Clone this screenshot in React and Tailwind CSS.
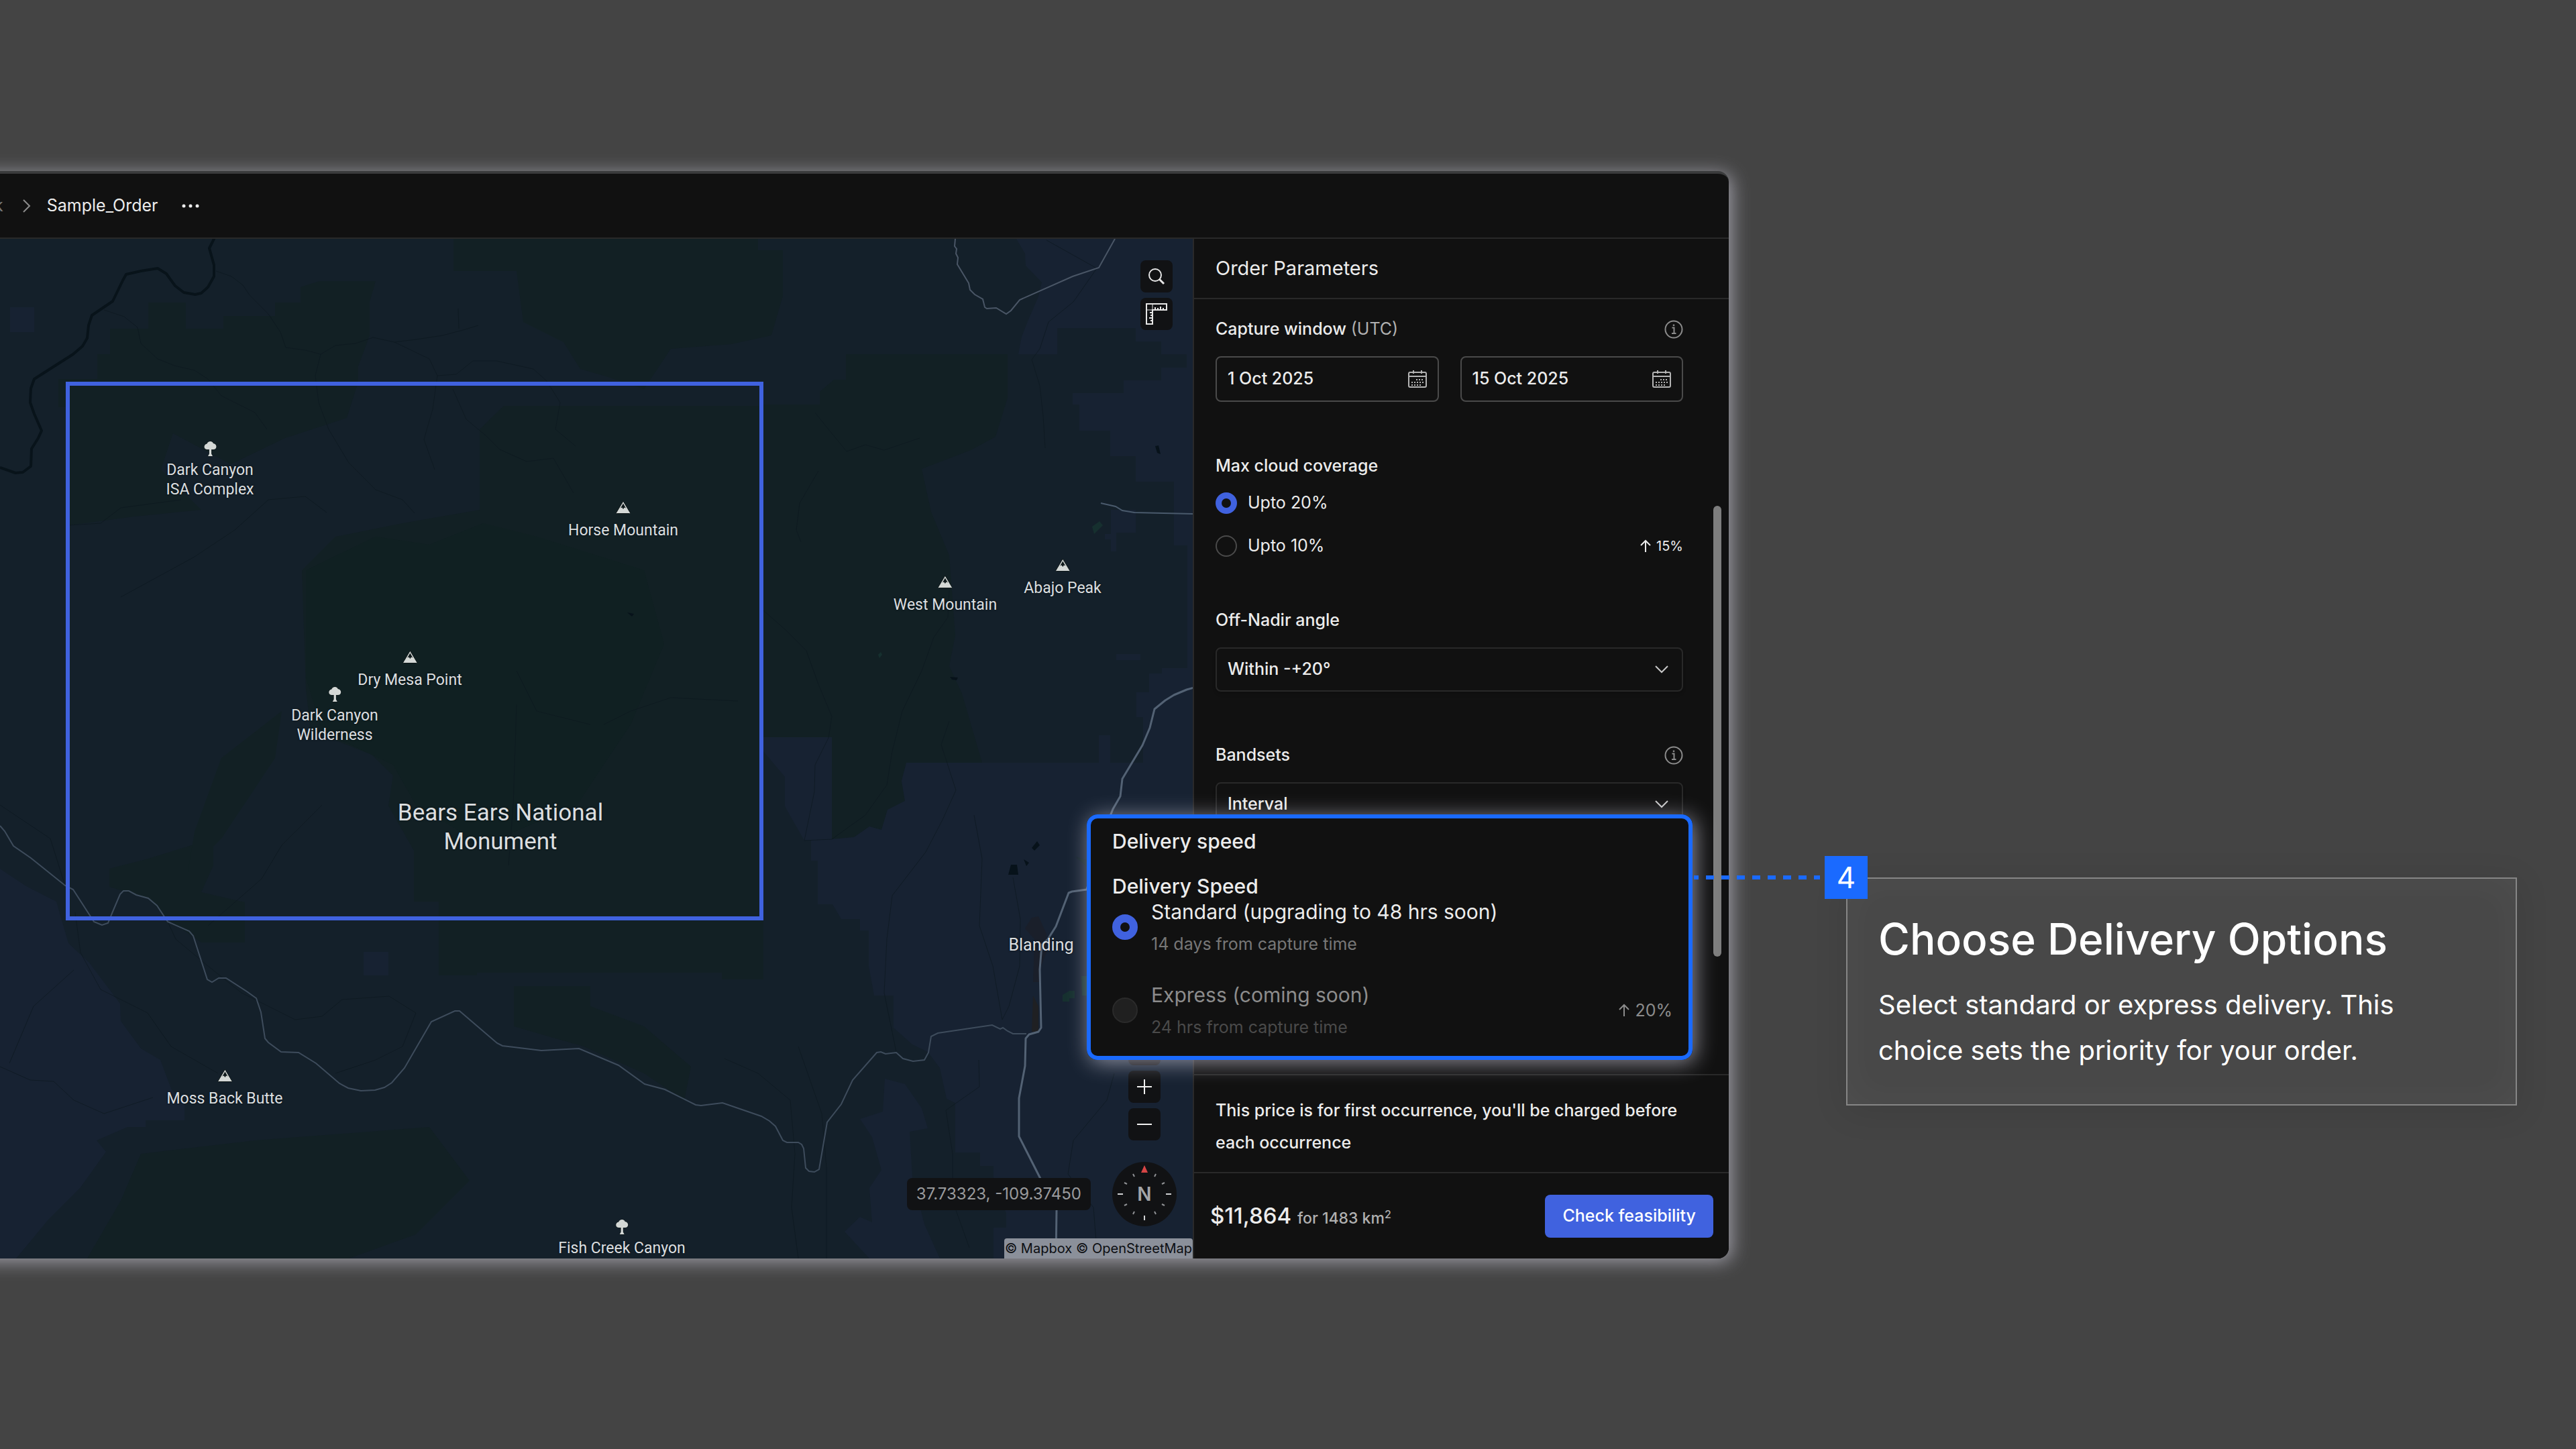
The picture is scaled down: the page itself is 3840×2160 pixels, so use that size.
import React, { useState } from 'react';

// --- Map data (canvas units, origin at the window's top edge) ---
const LABELS = [
    { id: 'isa', x: 313, y: 654, icon: 'tree', lines: ['Dark Canyon', 'ISA Complex'] },
    { id: 'horse', x: 929, y: 744, icon: 'peak', lines: ['Horse Mountain'] },
    { id: 'dry', x: 611, y: 967, icon: 'peak', lines: ['Dry Mesa Point'] },
    { id: 'wild', x: 499, y: 1020, icon: 'tree', lines: ['Dark Canyon', 'Wilderness'] },
    { id: 'west', x: 1409, y: 855, icon: 'peak', lines: ['West Mountain'] },
    { id: 'abajo', x: 1584, y: 830, icon: 'peak', lines: ['Abajo Peak'] },
    { id: 'moss', x: 335, y: 1591, icon: 'peak', lines: ['Moss Back Butte'] },
    { id: 'fish', x: 927, y: 1814, icon: 'tree', lines: ['Fish Creek Canyon'] },
];

const RIVER = 'M319 350L319 356L312 370L319 395L319 412L310 428L300 437L291 439L274 436L261 426L248 408L235 400L210 404L188 409L183 418L168 449L137 470L132 485L130 504L123 516L109 528L51 565L46 579L45 600L51 617L62 642L57 653L47 669L46 695L34 704L23 705L0 697';

const ROAD = 'M0 1231L7 1239L20 1261L46 1279L97 1320L109 1326L140 1374L152 1379L161 1376L168 1359L179 1333L184 1328L192 1328L203 1334L221 1339L234 1350L250 1374L282 1388L288 1395L309 1460L316 1464L326 1458L337 1458L368 1478L382 1488L389 1509L395 1548L400 1554L419 1568L445 1569L471 1585L506 1615L519 1622L538 1626L559 1625L573 1621L584 1614L603 1592L643 1523L678 1507L685 1507L741 1555L749 1559L807 1566L863 1563L922 1588L961 1616L991 1624L1037 1647L1045 1648L1077 1644L1135 1664L1147 1671L1156 1679L1167 1700L1173 1703L1190 1703L1195 1706L1198 1712L1201 1741L1206 1746L1214 1747L1221 1743L1233 1673L1254 1646L1271 1610L1307 1569L1313 1568L1320 1571L1336 1569L1346 1578L1361 1582L1378 1580L1384 1569L1388 1545L1398 1540L1479 1528L1491 1534L1495 1532L1502 1537L1510 1541L1530 1541';

const HIGHWAY = 'M1780 1025L1769 1028L1750 1036L1737 1044L1721 1057L1714 1085L1703 1111L1673 1161L1670 1187L1659 1206L1650 1229L1620 1326L1598 1329L1593 1331L1574 1381L1562 1400L1553 1408L1550 1445L1552 1532L1548 1538L1534 1542L1529 1548L1528 1589L1519 1637L1519 1694L1551 1757L1561 1771L1571 1782L1575 1804L1574 1876';

const NORTH_ROAD = 'M1424 356L1423 367L1426 371L1425 378L1428 384L1427 394L1444 422L1446 432L1453 439L1465 446L1468 458L1471 460L1485 459L1500 468L1507 463L1520 447L1599 412L1638 399L1662 356';

const NAVY = [
    'M1515 356L1528 378L1529 396L1553 421L1548 442L1532 479L1523 502L1518 528H1576V489H1693V509H1731V528H1769V548H1731V567H1675V586H1599V603H1609V642H1655V680H1693V718H1750V813H1770V996H1732V1004H1713V1032H1694V1069H1704V1137H1655V1111H1655V1096H1638V1137H1351L1344 1164L1349 1194L1323 1207L1314 1237L1296 1232L1273 1248L1240 1251H1209V1283H1219V1348H1241L1254 1370H1282V1387H1295V1440L1303 1484H1332V1532L1360 1557L1383 1568L1401 1592L1411 1638L1424 1644V1718H1461V1738H1481V1755L1500 1809V1830H1481V1876H1780V356Z',
    'M1138 1099H1240V1251L1199 1253L1170 1202V1158L1138 1120Z',
    'M1319 1608L1349 1616L1374 1652L1383 1682L1356 1687L1360 1755L1378 1825L1401 1876H1296L1259 1836L1282 1814L1300 1822L1296 1771L1314 1744L1300 1695L1282 1668L1316 1657Z',
    'M0 1295L39 1321L84 1344L102 1406L133 1435L179 1496L180 1522L210 1563L239 1580L256 1625L275 1643V1670H217V1680H190L144 1700L158 1717L120 1770L73 1817L24 1876H0Z',
    'M15 458H51V495H15Z',
    'M542 1419H579V1454H542Z',
    'M1656 760H1693V794H1664V822H1656V804H1647V796H1656Z',
    'M1664 975H1700V984H1664Z',
];

const GREEN = [
    'M1261 528H1502V593L1484 651L1447 671L1374 699L1388 763L1415 828L1424 947L1415 993L1434 1034L1464 1137H1351L1344 1164L1349 1194L1323 1207L1314 1237L1296 1232L1273 1248L1240 1251V1099H1138V603H1222V584L1243 566H1261Z',
    'M751 605H1138V1460H1076V1450H711V1454H654V1344H617V1268L579 1201L586 1156L554 1125L463 1089L456 1027L450 850L500 800L600 780L715 760L715 640Z',
    'M221 451H277V490H333V471H410V451H448V428L476 419H560L551 450V500L534 546V569L517 623L425 653L344 692L258 646L240 700L300 760L200 770L103 783V607H87V565H145V528H164V490H221Z',
    'M676 356H1130V373H1167V441L1150 500L1090 513L1000 520L960 580L900 560L865 550L840 510L780 480L770 404H676Z',
    'M221 1280L318 1250V1290L300 1330L365 1345V1405H300L250 1370L221 1339L163 1322V1295Z',
    'M330 1130L420 1060L410 1130L330 1250L280 1300L290 1240Z',
    'M766 1470H880V1500L960 1530L1030 1590L1020 1640L960 1600L870 1560L766 1530Z',
    'M210 1720L380 1700L640 1680L700 1760L620 1840L520 1876H130L180 1790Z',
];

const CORE = [
    'M456 850L560 800L640 812L720 780L800 800L960 850L990 960L940 1080L860 1200L720 1260L620 1200L586 1140L480 1090L456 1010Z',
];

const STREAMS = [
    'M322 404L345 412L362 425L372 440L400 468L418 495L426 518L455 522L478 528L500 515L530 512L556 503L588 510L620 506L660 500L690 492L713 485M683 460L684 490',
    'M155 462L185 472L205 488L210 512L235 535L260 545L290 552L310 565L330 590L380 615L398 640',
    'M478 528L470 560L475 600L490 640L520 690L560 730L600 745L618 765',
    'M588 510L640 535L652 560L680 558L705 538L740 538L795 550L815 568L835 600L828 640L858 665',
    'M652 560L645 610L632 655L648 700M675 580L695 625L725 650L745 670L785 688L825 683L855 735',
    'M103 783L150 780L180 757L270 745M180 890L290 830L350 790L400 745L455 740L487 764',
    'M1215 615L1235 640L1262 673L1290 663L1318 671L1371 653M1220 702L1192 750L1187 790L1194 808',
    'M1138 910L1170 938L1202 970L1220 1020L1240 1068L1235 1100L1215 1140L1214 1180L1199 1253L1240 1251L1290 1215L1322 1170L1330 1120L1345 1060L1374 1000L1392 950L1413 920L1415 880',
    'M1560 358L1635 400L1600 450L1563 480L1550 520L1538 536L1550 575L1555 620L1558 668',
    'M1415 1075L1403 1110L1425 1178L1405 1222L1380 1270L1330 1335L1322 1400L1318 1480L1336 1568',
    'M1452 1215L1464 1280L1460 1380L1480 1440L1494 1520M1510 1308L1521 1370L1520 1440L1504 1500L1494 1520',
    'M97 1320L75 1250L0 1200M112 1360L120 1420L150 1475L220 1510L255 1560L325 1600',
    'M250 1374L262 1400L310 1440L360 1480L400 1500L440 1520L480 1515L510 1490L580 1485L620 1510L600 1560L560 1580L500 1600',
    'M1190 1560L1225 1660L1232 1740L1232 1876M1080 1578L1130 1600L1178 1640L1185 1720L1180 1800L1190 1876',
    'M1661 1600L1650 1640L1600 1700L1592 1750L1630 1800L1636 1876M1459 1580L1460 1620L1410 1655L1420 1720L1420 1790L1445 1860',
    'M0 1590L45 1610L80 1612L110 1640L155 1660L228 1636M14 1585L50 1500L110 1446',
    'M480 1200L420 1260L390 1310L310 1380M770 1000L800 1060L880 1080M770 1050L765 1200L758 1290M900 1080L940 1060L1000 1040L1100 1045',
];

// --- Icons ---
const TreeIcon = () => (
    <svg viewBox="0 0 22 26" className="h-[26px] w-[22px]" fill="#d4d8d6" stroke="#0c1516" strokeWidth="1" paintOrder="stroke">
        <path d="M11 2C13.500 2 15 3.400 15.400 5C18 5.200 20 7.200 20 9.800C20 12.600 18 14 15.600 14H12.600V20.500L14.500 24H7.500L9.400 20.500V14H6.400C4 14 2 12.600 2 10C2 7.600 3.800 5.800 6 5.400C6.800 3.400 8.600 2 11 2Z" />
    </svg>
);

const PeakIcon = () => (
    <svg viewBox="0 0 24 22" className="h-[22px] w-[24px]" stroke="#0c1516" strokeWidth="1">
        <path d="M12 1L22.500 18.500C22.500 19 22 19.500 21.500 19.500H2.500C2 19.500 1.500 19 1.500 18.500Z" fill="#d4d8d6" />
        <path d="M12 4.500L16 11.500L13.800 10.400L12 13L10.200 10.400L8 11.500Z" fill="#101a1c" stroke="none" />
    </svg>
);

const RulerIcon = () => (
    <svg viewBox="0 0 34 34" className="size-[34px]" fill="none" stroke="#e6e6e6" strokeWidth="2">
        <path d="M2 2H32V11H11V32H2Z" />
        <path d="M11 2V11M2 11H11" strokeWidth="1" />
        <path d="M15 11V7M19 11V8M23 11V6M27 11V8M11 15H7M11 19H8M11 23H6M11 27H8" strokeWidth="2" />
    </svg>
);

const SearchIcon = () => (
    <svg viewBox="0 0 28 28" className="size-7" fill="none" stroke="#e6e6e6" strokeWidth="2">
        <circle cx="12" cy="12" r="9" />
        <path d="M18.500 18.500L25 25" strokeWidth="3" />
    </svg>
);

const InfoIcon = () => (
    <svg viewBox="0 0 28 28" className="size-7" fill="none" stroke="#8c8c8c" strokeWidth="2">
        <circle cx="14" cy="14" r="12.500" />
        <path d="M11.500 11.500H14.500V20M11 20H17.500" />
        <circle cx="14" cy="7.800" r="1.400" fill="#8c8c8c" stroke="none" />
    </svg>
);

const CalendarIcon = () => (
    <svg viewBox="0 0 28 28" className="size-7" fill="none" stroke="#b4b4b4" strokeWidth="2">
        <rect x="1" y="4" width="26" height="22" rx="2" />
        <path d="M1 10H27M8 1V6M20 1V6" />
        <path d="M12 15H24M5 19H24M5 23H20" strokeDasharray="2 2" />
    </svg>
);

const ChevronDown = () => (
    <svg viewBox="0 0 20 12" className="pointer-events-none col-start-1 row-start-1 mr-[22px] h-3 w-5 justify-self-end" fill="none" stroke="#c8c8c8" strokeWidth="2">
        <path d="M1 1L10 10L19 1" />
    </svg>
);

const ArrowUp = () => (
    <svg viewBox="0 0 16 20" className="h-5 w-4" fill="none" stroke="currentColor" strokeWidth="2">
        <path d="M8 19V2M1 9L8 2L15 9" />
    </svg>
);

const Compass = () => (
    <svg viewBox="0 0 96 96" className="size-24">
        <circle cx="48" cy="48" r="48" fill="#111214" />
        <path d="M48 5L53 16H43Z" fill="#d64545" />
        <g stroke="#8f9194" strokeWidth="2">
            <path d="M65 18L63 22M78 31L74 33M78 65L74 63M65 78L63 74M31 78L33 74M18 65L22 63M18 31L22 33M31 18L33 22" />
            <path d="M80 48H88M8 48H16M48 80V87" stroke="#d0d2d4" />
        </g>
        <text x="48" y="58" textAnchor="middle" fontSize="28" fontWeight="600" fill="#a3a5a8">N</text>
    </svg>
);

// --- Map ---
const MapView = () => (
    <div className="relative min-w-0 flex-1 overflow-hidden bg-[#14202a]">
        <svg viewBox="0 356 1778 1520" preserveAspectRatio="xMinYMin slice" className="absolute inset-0 size-full" fill="none">
            {GREEN.map(d => <path key={d} d={d} fill="#122024" />)}
            {CORE.map(d => <path key={d} d={d} fill="#102022" />)}
            {NAVY.map(d => <path key={d} d={d} fill="#172232" />)}
            {STREAMS.map(d => <path key={d} d={d} stroke="#0d181f" strokeOpacity="0.7" strokeWidth="1" />)}
            <path d="M1538 1368L1548 1366L1560 1392V1420L1550 1445V1464H1540L1542 1400L1528 1384Z" fill="#1a1f2a" />
            <path d="M1540 1484L1548 1500V1538H1538Z" fill="#1f2023" />
            <g fill="#07121a">
                <path d="M1507 1289L1516 1289L1518 1304H1503Z" />
                <path d="M1538 1264L1546 1254L1550 1260L1542 1268Z" />
                <path d="M1526 1281L1534 1286L1530 1291Z" />
                <path d="M1722 665L1727 664L1730 677L1725 675Z" />
                <path d="M1416 1009L1428 1010L1426 1014L1419 1013Z" />
                <path d="M935 913L945 915L942 919Z" />
                <path d="M1603 1277L1620 1282V1292Z" fill="#15252b" />
            </g>
            <g fill="#16302f">
                <path d="M1628 785L1639 777L1644 783L1631 796Z" />
                <path d="M1309 976L1313 972L1315 976L1311 981Z" />
                <path d="M1584 1483L1594 1477H1602V1488H1594V1493H1584Z" />
                <path d="M1612 1455H1620V1484H1613Z" />
            </g>
            <path d={RIVER} stroke="#08131a" strokeWidth="4" strokeLinejoin="round" />
            <path d={ROAD} stroke="#3e4c5c" strokeWidth="2" />
            <path d={NORTH_ROAD} stroke="#4a5666" strokeWidth="2" />
            <path d="M1641 750L1663 755L1673 761L1691 764L1780 766" stroke="#4a5a6c" strokeWidth="2" />
            <path d={HIGHWAY} stroke="#536274" strokeWidth="3" strokeLinejoin="round" />
            <path d="M101 572H1135V1369H101Z" stroke="#4062df" strokeWidth="6" />
        </svg>

        {/* Place names pinned on the canvas */}
        <div className="absolute top-[-354px] left-0 font-['Roboto',sans-serif] text-[23px] leading-[29px] text-[#dcdfe0] text-shadow-[0_0_3px_#0a1214]">
            {LABELS.map(label => (
                <div
                    key={label.id}
                    className={`absolute flex -translate-x-1/2 flex-col items-center whitespace-nowrap ${label.icon === 'tree' ? 'gap-1' : 'gap-2'}`}
                    style={{ left: label.x, top: label.y }}
                >
                    {label.icon === 'tree' ? <TreeIcon /> : <PeakIcon />}
                    <p className="text-center">{label.lines.map(line => <span key={line} className="block">{line}</span>)}</p>
                </div>
            ))}
            <p className="absolute top-[1188px] left-[746px] -translate-x-1/2 text-center text-[35px] leading-[43px] whitespace-nowrap">
                Bears Ears National<br />Monument
            </p>
            <p className="absolute top-[1392px] left-[1552px] -translate-x-1/2 text-[25px]">Blanding</p>
        </div>

        {/* Map tools */}
        <div className="absolute top-8 right-[30px] flex flex-col gap-2">
            <button aria-label="Search" className="grid size-12 place-items-center rounded-lg bg-[#111214]"><SearchIcon /></button>
            <button aria-label="Measure" className="grid size-12 place-items-center rounded-lg bg-[#111214]"><RulerIcon /></button>
        </div>
        <div className="absolute right-6 bottom-12 flex items-end gap-8">
            <output className="mb-6 flex h-12 items-center rounded-lg bg-[#111214] px-[14px] text-[24px] whitespace-nowrap text-[#9a9b9d]">37.73323, -109.37450</output>
            <div className="flex flex-col items-center gap-2">
                <button aria-label="Locate" className="size-12 rounded-lg bg-[#111214]"></button>
                <button aria-label="Zoom in" className="grid size-12 place-items-center rounded-lg bg-[#111214]">
                    <svg viewBox="0 0 24 24" className="size-6" stroke="#f0f0f0" strokeWidth="2"><path d="M12 1V23M1 12H23" /></svg>
                </button>
                <button aria-label="Zoom out" className="grid size-12 place-items-center rounded-lg bg-[#111214]">
                    <svg viewBox="0 0 24 24" className="size-6" stroke="#f0f0f0" strokeWidth="2"><path d="M1 12H23" /></svg>
                </button>
                <div className="mt-6"><Compass /></div>
            </div>
        </div>
        <p className="absolute right-0 bottom-0 flex h-[30px] items-center gap-[6px] rounded-t-sm bg-[#8b909a] px-[1px] text-[20px] whitespace-nowrap text-[#0c0e12]">
            <a href="#mapbox">© Mapbox</a> <a href="#osm">© OpenStreetMap</a>
        </p>
    </div>
);

const DateField = ({ label, value }) => (
    <label className="flex h-[68px] min-w-0 flex-1 items-center rounded-lg border-2 border-[#4a4a4a] px-4">
        <input aria-label={label} defaultValue={value} className="w-0 min-w-0 flex-1 bg-transparent outline-none" />
        <CalendarIcon />
    </label>
);

const SelectField = ({ id, label, value, info }) => (
    <div className="flex flex-col gap-[22px]">
        <div className="flex h-9 items-center justify-between">
            <label htmlFor={id}>{label}</label>
            {info && <InfoIcon />}
        </div>
        <div className="grid items-center">
            <select id={id} className="col-start-1 row-start-1 h-[66px] w-full appearance-none rounded-lg border-2 border-[#292929] bg-[#111] px-4 shadow-md">
                <option>{value}</option>
            </select>
            <ChevronDown />
        </div>
    </div>
);

// --- Order sidebar ---
const OrderPanel = () => {
    const [cloud, setCloud] = useState('20');

    return (
        <aside className="flex w-[799px] shrink-0 flex-col border-l-2 border-[#292929] bg-[#111] text-[25px] font-medium text-[#ececec]">
            <h2 className="flex h-[90px] shrink-0 items-center border-b-2 border-[#292929] px-8 text-[29px] font-normal">Order Parameters</h2>

            <div className="relative flex min-h-0 flex-1 flex-col gap-[77px] overflow-hidden pt-[27px] pr-[68px] pl-8">
                <div className="flex flex-col gap-[22px]">
                    <div className="flex h-9 items-center justify-between">
                        <p>Capture window <span className="font-normal text-[#b0b0b0]">(UTC)</span></p>
                        <InfoIcon />
                    </div>
                    <div className="flex gap-8">
                        <DateField label="Capture start" value="1 Oct 2025" />
                        <DateField label="Capture end" value="15 Oct 2025" />
                    </div>
                </div>

                <fieldset>
                    <legend className="mb-[22px] h-9 leading-9">Max cloud coverage</legend>
                    <div className="flex flex-col gap-8 font-normal">
                        {['20', '10'].map(limit => (
                            <div key={limit} className="flex h-8 items-center justify-between">
                                <label className="flex items-center gap-4">
                                    <input
                                        type="radio"
                                        name="cloud"
                                        checked={cloud === limit}
                                        onChange={() => setCloud(limit)}
                                        className="size-8 appearance-none rounded-full border-2 border-[#4a4a4a] checked:border-[9px] checked:border-[#4062df]"
                                    />
                                    Upto {limit}%
                                </label>
                                {limit === '10' && <span className="flex items-center gap-2 text-[20px]"><ArrowUp />15%</span>}
                            </div>
                        ))}
                    </div>
                </fieldset>

                <SelectField id="nadir" label="Off-Nadir angle" value="Within -+20°" />
                <SelectField id="bandsets" label="Bandsets" value="Interval" info />

                <div className="absolute top-[308px] right-[11px] h-[672px] w-3 rounded-full bg-[#7d7d7d]"></div>
            </div>

            <p className="shrink-0 border-t-2 border-[#292929] px-8 pt-7 pb-5 leading-[48px]">
                This price is for first occurrence, you'll be charged before each occurrence
            </p>
            <div className="flex h-[129px] shrink-0 items-center justify-between border-t-2 border-[#292929] pr-[23px] pl-6">
                <p className="text-[33px]">$11,864 <span className="text-[23px] text-[#b0b0b0]">for 1483 km<sup className="text-[16px]">2</sup></span></p>
                <button className="h-16 rounded-lg bg-[#4062df] px-[26px] text-white">Check feasibility</button>
            </div>
        </aside>
    );
};

// --- Highlighted delivery card ---
const DeliveryCard = () => (
    <fieldset className="absolute right-[54px] bottom-[296px] h-[366px] w-[903px] rounded-2xl border-[6px] border-[#1a6aff] bg-[#111] px-8 pt-4 text-[30px] leading-9 text-[#ececec] shadow-[4px_4px_32px_rgba(223,221,238,0.6)]">
        <h3 className="font-medium">Delivery speed</h3>
        <p className="mt-[31px] font-medium">Delivery Speed</p>
        <div className="mt-[2px] flex flex-col gap-[42px]">
            <label className="flex items-center gap-5">
                <input type="radio" name="speed" defaultChecked className="size-[38px] appearance-none rounded-full border-[12px] border-[#4062df]" />
                <span className="flex flex-col gap-[14px]">
                    Standard (upgrading to 48 hrs soon)
                    <span className="text-[25px] leading-8 text-[#777]">14 days from capture time</span>
                </span>
            </label>
            <label className="flex items-center gap-5 text-[#8c8c8c]">
                <input type="radio" name="speed" disabled className="size-[38px] appearance-none rounded-full border-2 border-[#2a2a2a] bg-[#202020]" />
                <span className="flex flex-1 flex-col gap-[14px]">
                    Express (coming soon)
                    <span className="text-[25px] leading-8 text-[#4a4a4a]">24 hrs from capture time</span>
                </span>
                <span className="-mr-2 flex items-center gap-2 text-[25px]"><ArrowUp />20%</span>
            </label>
        </div>
    </fieldset>
);

const App = () => {
    return (
        <div className="flex min-h-screen items-stretch overflow-hidden bg-[#444] pt-[255px] pb-[284px] font-['Inter',sans-serif]">
            <main className="relative flex min-w-0 flex-1 flex-col">
                {/* The window runs on past the left edge of the page */}
                <div className="-ml-12 flex flex-1 flex-col overflow-hidden rounded-r-2xl border-t-4 border-[#3a3b3c] bg-[#111] pl-12 shadow-[4px_4px_28px_rgba(223,221,238,0.6)]">
                    <header className="flex h-[97px] shrink-0 items-center border-b-2 border-[#292929] text-[25px] text-[#ececec]">
                        <nav className="flex items-center">
                            <a href="#task" className="-ml-[9px] text-[#777]">k</a>
                            <svg viewBox="0 0 12 20" className="ml-[29px] h-5 w-3" fill="none" stroke="#8c8c8c" strokeWidth="2"><path d="M1 1L10 10L1 19" /></svg>
                            <a href="#order" className="ml-6">Sample_Order</a>
                        </nav>
                        <button aria-label="More" className="ml-9">
                            <svg viewBox="0 0 26 6" className="h-[6px] w-[26px]" fill="#ececec"><circle cx="3" cy="3" r="2.500" /><circle cx="13" cy="3" r="2.500" /><circle cx="23" cy="3" r="2.500" /></svg>
                        </button>
                    </header>
                    <div className="flex min-h-0 flex-1">
                        <MapView />
                        <OrderPanel />
                    </div>
                </div>
                <DeliveryCard />
            </main>

            <aside className="w-[1263px] shrink-0 pt-[1053px] pr-[88px] pl-[175px] text-white">
                <div className="relative h-[340px] border-2 border-[#868686] bg-[#484848] px-[46px] pt-[46px] shadow-[0_8px_48px_rgba(0,0,0,0.1),inset_0_0_60px_rgba(255,255,255,0.04)]">
                    <span className="absolute -top-[34px] -left-[34px] grid size-16 place-items-center bg-[#1a6aff] text-[44px] leading-none">4</span>
                    <svg className="absolute -top-[5px] -left-[229px] h-[6px] w-[188px]" stroke="#1a6aff" strokeWidth="6"><path d="M0 3H188" strokeDasharray="12 11" strokeDashoffset="5" /></svg>
                    <h1 className="text-[64px] leading-[88px] font-medium">Choose Delivery Options</h1>
                    <p className="mt-5 text-[40px] leading-[68px]">Select standard or express delivery. This choice sets the priority for your order.</p>
                </div>
            </aside>
        </div>
    );
};

export default App;
